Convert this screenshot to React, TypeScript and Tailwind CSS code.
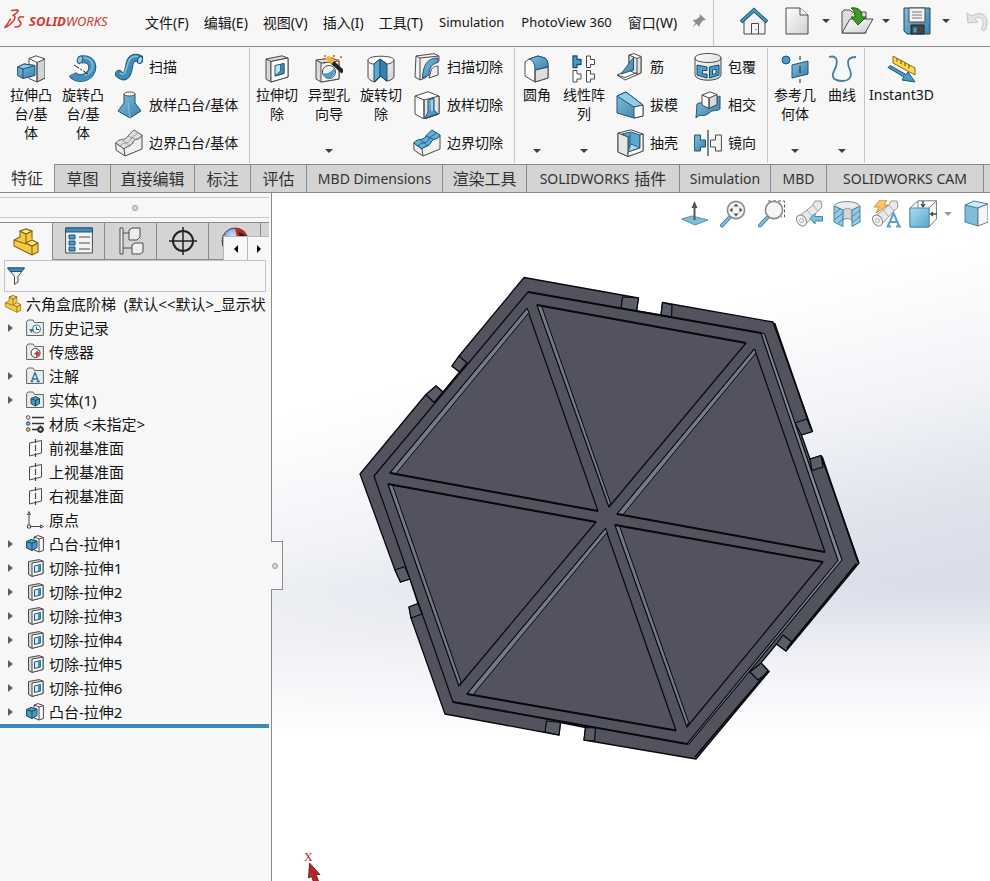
import React from "react";

type IconProps = { children: React.ReactNode; className?: string; box?: string };

function Icon({ children, className = "size-7", box = "0 0 28 28" }: IconProps) {
  return (
    <svg viewBox={box} className={`${className} shrink-0`} fill="none" stroke="#4a4a4a" strokeWidth="1" strokeLinejoin="round" aria-hidden="true">
      {children}
    </svg>
  );
}

function Gradients() {
  return (
    <svg className="absolute size-0" aria-hidden="true">
      <defs>
        <linearGradient id="blue" x1="0" y1="0" x2="1" y2="1">
          <stop offset="0" stopColor="#84bfdd" />
          <stop offset="1" stopColor="#3880a8" />
        </linearGradient>
        <linearGradient id="pale" x1="0" y1="0" x2="1" y2="1">
          <stop offset="0" stopColor="#ffffff" />
          <stop offset="1" stopColor="#cfcfcf" />
        </linearGradient>
        <linearGradient id="sky" x1="0" y1="0" x2="1" y2="1">
          <stop offset="0" stopColor="#a9dcf3" />
          <stop offset="1" stopColor="#5ba6cb" />
        </linearGradient>
        <radialGradient id="ball" cx="0.4" cy="0.3" r="0.8">
          <stop offset="0" stopColor="#dbe6ff" />
          <stop offset="0.6" stopColor="#4a6fc0" />
          <stop offset="1" stopColor="#20356e" />
        </radialGradient>
      </defs>
    </svg>
  );
}

/* ---------- ribbon icons ---------- */

const ExtrudeBoss = () => (
  <Icon>
    <path d="M12 3.500 19 0.800 28 4 28 23 20 27 12 23.500Z" fill="#fff" />
    <path d="M20 7.500 28 4 28 23 20 27Z" fill="#d4d4d4" />
    <path d="M12 3.500 20 7.500V27" />
    <path d="M0.6 12 7 9 18 10.500 18 20.500 6 23.500 0.600 20.500Z" fill="url(#blue)" stroke="#1d5474" />
    <path d="M0.6 12 7 9 18 10.500 6 14Z" fill="#93cae5" stroke="#1d5474" />
    <path d="M6 14V23.500" stroke="#1d5474" />
  </Icon>
);
const RevolveBoss = () => (
  <Icon>
    <path d="M12 4.500C26 2 27 19 15 22.500 10 24 5 22 3.500 19" stroke="#1d5474" strokeWidth="8" />
    <path d="M12 4.500C26 2 27 19 15 22.500 10 24 5 22 3.500 19" stroke="#458fba" strokeWidth="6.400" />
    <path d="M12 3C27 1 27 17 16 20.500" stroke="#82bbda" strokeWidth="1.800" />
    <ellipse cx="11" cy="4.700" rx="2.600" ry="3.800" fill="#8cc6e2" stroke="#1d5474" transform="rotate(20 11 4.700)" />
    <path d="M5 10 19 19" stroke="#222" strokeDasharray="6 1.500 2 1.500" />
  </Icon>
);
const SweepBoss = () => (
  <Icon>
    <path d="M4 21C11 27 13 20 14 14 15 6 18 3 25 6" stroke="#1d5474" strokeWidth="8" strokeLinecap="round" />
    <path d="M4 21C11 27 13 20 14 14 15 6 18 3 25 6" stroke="#3e8ab6" strokeWidth="6.300" strokeLinecap="round" />
    <path d="M5 20C10 24 11 17 12.500 12 14 5 18 2 24 4" stroke="#86bfdd" strokeWidth="1.600" />
    <ellipse cx="25" cy="7" rx="2.400" ry="3.600" fill="#a4d3eb" stroke="#1d5474" transform="rotate(15 25 7)" />
  </Icon>
);
const LoftBoss = () => (
  <Icon>
    <path d="M9 3V12L3 20 15 27 26 20 20 12V3Z" fill="url(#blue)" stroke="#1d5474" />
    <path d="M13 12 15 27" stroke="#9bcfe6" strokeWidth="0.800" />
    <ellipse cx="14.500" cy="3" rx="5.500" ry="2" fill="#fff" />
  </Icon>
);
const surfaceTop = "M0.800 14C5 8 9 13 13 7 15 4 17 3 19 1L27 6C24 12 21 8 18 13 16 18 11 17 9 20Z";
const Boundary = ({ cut = false }: { cut?: boolean }) => (
  <Icon>
    <path d="M0.800 14 9 20C11 17 16 18 18 13 21 8 24 12 27 6V20L10 27 1 21Z" fill="#f0f0f0" />
    <path d={surfaceTop} fill={cut ? "#62b0d8" : "#dedede"} stroke={cut ? "#1d5474" : "#666"} />
    <path d="M5 17C9 12 13 16 16 10 18 6 20 8 23 3.500M7 10.500 15 17M13 7 21 10.500" stroke={cut ? "#164a68" : "#8a8a8a"} strokeWidth="0.800" />
    <path d="M9 20 10 27" />
  </Icon>
);
const ExtrudeCut = () => (
  <Icon>
    <path d="M3 4 19 0.800 25 3V22L8 27 3 24Z" fill="#d8d8d8" />
    <path d="M3 4 8 6.500 25 3M8 6.500V27" />
    <path d="M8 6.500 25 3V22L8 27Z" fill="#fff" />
    <path d="M12 10.500 21 8.500V18.500L12 21Z" fill="#bfe2f1" stroke="#1d5474" />
    <path d="M17.500 9.500 21 8.500V18.500L12 21 17.500 16Z" fill="#3f8fb9" stroke="#1d5474" strokeWidth="0.800" />
  </Icon>
);
const HoleWizard = () => (
  <Icon>
    <path d="M1 5 17 3 24 6V24L6 27 1 24Z" fill="#dadada" />
    <path d="M6 8 24 6V24L6 27Z" fill="#f6f6f6" />
    <path d="M1 5 6 8" />
    <circle cx="14" cy="17" r="6.500" fill="#f3fafd" />
    <path d="M7.800 18C12 19 17 17 19 12.500 22 18 17 24 13 23.500 10 23 8 21 7.800 18Z" fill="#4d9fca" stroke="none" />
    <path d="M16 6 28 17" stroke="#222" strokeWidth="4.200" />
    <path d="M12 2 18 7.500" stroke="#f3b52c" strokeWidth="4.200" />
    <path d="M8 4h2M10 0v2M18 1h2M23 4v2M26 1v2M23 8h2M9 8v1" stroke="#d07a1c" strokeWidth="1.800" />
  </Icon>
);
const RevolveCut = () => (
  <Icon>
    <path d="M1 5V22C1 24 4 26 8 27L14 21 19 26C21 26 26 25 27 22V5Z" fill="url(#pale)" />
    <path d="M1 5C1 0 27 0 27 5 26 8 22 9 20 9L13 4 7 9C4 9 1 8 1 5Z" fill="#fff" />
    <path d="M13 4 7 9V27L13 21Z" fill="#5aa9d0" stroke="#1d5474" />
    <path d="M13 4 20 9V26L13 21Z" fill="#3880a8" stroke="#1d5474" />
  </Icon>
);
const SweepCut = () => (
  <Icon>
    <path d="M3 3 21 0.600 26 3V8C14 9 16 25 12 25L7 27 2 24Z" fill="#f2f2f2" />
    <path d="M3 3 7 5 26 3M7 5V27" />
    <path d="M25 5C13 5 10 14 9.500 25L16 22C16 16 18 11 25 9.500Z" fill="url(#blue)" stroke="#1d5474" />
    <path d="M18 18C18 15 22 13 25 13V22L16 25Z" fill="#eee" />
  </Icon>
);
const LoftCut = () => (
  <Icon>
    <path d="M2 5 15 0.800 26 5V23L11 28 2 23Z" fill="#fff" />
    <path d="M11 9 26 5V23L11 28Z" fill="#e6e6e6" />
    <path d="M2 5 11 9V28" />
    <path d="M15 9 21 7V19L25 23 12 27 15 21Z" fill="url(#blue)" stroke="#1d5474" />
    <path d="M19 9V20" stroke="#a5d7ee" strokeWidth="1.800" />
  </Icon>
);
const Fillet = () => (
  <Icon>
    <path d="M2 7 6 4 15 1 22 3C25 5 25 9 25 12V23L12 27 2 21Z" fill="#fff" />
    <path d="M12 15 25 12V23L12 27Z" fill="#dedede" />
    <path d="M6 4 15 1 22 3C25 5 25 9 25 12L12 15C12 9 10 5 6 4Z" fill="url(#blue)" stroke="#1d5474" />
    <path d="M12 15V27" />
  </Icon>
);
const tee = "M0 0H4V3.500H8V8.500H4V11.500H0Z";
const Pattern = () => (
  <Icon>
    <path d={tee} transform="translate(3 1)" fill="#4a9ac4" stroke="#1d5474" strokeWidth="1.300" />
    <path d={tee} transform="translate(16.500 1)" fill="#fff" />
    <path d={tee} transform="translate(3 15.500)" fill="#fff" />
    <path d={tee} transform="translate(16.500 15.500)" fill="#fff" />
  </Icon>
);
const Rib = () => (
  <Icon>
    <path d="M13 2 18 0.600 25 3.500V20L9 27 1 22 13 17Z" fill="#fff" />
    <path d="M13 2 21 5.500 25 3.500V20L21 21.500 13 17Z" fill="#e3e3e3" />
    <path d="M21 5.500V21.500" />
    <path d="M17.500 4.500V17L5 21Z" fill="url(#blue)" stroke="#1d5474" />
    <path d="M1 22 9 24.500 21 19.500" />
  </Icon>
);
const Draft = () => (
  <Icon>
    <path d="M1 5 10 1 27 14 27 25 18 27 1 22Z" fill="url(#blue)" stroke="#1d5474" />
    <path d="M1 5 10 1 27 14 18 16Z" fill="#8fcdeb" stroke="#1d5474" />
    <path d="M18 16 27 14V25L18 27Z" fill="#fff" />
  </Icon>
);
const Shell = () => (
  <Icon>
    <path d="M2 4 15 0.800 27 5V22L12 27.500 2 23Z" fill="#f4f4f4" />
    <path d="M6 5 15 3 24 6V19L12 23V8Z" fill="#5aa9d0" stroke="#1d5474" />
    <path d="M12 8 15 3V15L12 23Z" fill="#3880a8" stroke="none" />
    <path d="M15 15 24 19 12 23Z" fill="#a9dcf3" stroke="#1d5474" strokeWidth="0.800" />
    <path d="M2 4 12 8V27.500L2 23Z" fill="#e6e6e6" />
    <path d="M12 23 24 19V6L27 5V22L12 27.500Z" fill="#fff" />
  </Icon>
);
const Wrap = () => (
  <Icon>
    <path d="M1 5C1 -1 27 -1 27 5V22C26 29 2 29 1 22Z" fill="url(#pale)" />
    <path d="M1 5C1 11 27 11 27 5" />
    <path d="M3 12 13 14V17.500H8.500V21H13V25L3 22Z" fill="#4d9fca" stroke="#164a68" />
    <path d="M15.500 14 25 12V22L15.500 25Z" fill="#4d9fca" stroke="#164a68" />
    <path d="M18.500 17 22 16V20.500L18.500 21.500Z" fill="#e6f4fa" stroke="#164a68" />
  </Icon>
);
const Intersect = () => (
  <Icon>
    <path d="M3 13C8 10 10 14 15 9 19 6 22 8 26 5V18C22 21 19 18 15 22 9 27 6 22 2 27Z" fill="url(#blue)" stroke="#1d5474" />
    <path d="M8 4 16 0.800 23 3.500V13.500L15 17.500 8 14Z" fill="#fff" />
    <path d="M15 7 23 3.500V13.500L15 17.500Z" fill="#d9d9d9" />
    <path d="M8 4 15 7V17.500" />
  </Icon>
);
const Mirror = () => (
  <Icon>
    <path d="M0.600 6H6.500V11H11.500V18H6.500V22H0.600Z" fill="url(#blue)" stroke="#1d5474" />
    <path d="M27.400 6H21.500V11H16.500V18H21.500V22H27.400Z" fill="#f4f4f4" />
    <path d="M14 1V27" stroke="#111" />
  </Icon>
);
const RefGeometry = () => (
  <Icon>
    <circle cx="5" cy="5" r="4" fill="#4a9ac4" stroke="#1d5474" />
    <path d="M11 10 27 6V19L11 23Z" fill="url(#blue)" stroke="#1d5474" />
    <path d="M19 1V5M19 11V18M19 24V28" stroke="#222" />
  </Icon>
);
const Curves = () => (
  <Icon>
    <path d="M1 2C12 -1 9 11 6 16 2 24 9 26 14 26 20 26 25 23 22 15 18 6 20 2 28 2" stroke="#3d7fa6" strokeWidth="1.800" />
  </Icon>
);
const Instant3D = () => (
  <Icon className="h-7 w-[30px]" box="0 0 30 28">
    <path d="M6 1 28 13V20L6 8Z" fill="#ffd74a" stroke="#8a6914" />
    <path d="M10 3.500V6.500M14 5.500V9M18 8V11M22 10V13.500" stroke="#5a4510" />
    <path d="M1 12.500 17 22 15 25 28 27 21 17 19 19.500 3 10.500Z" fill="#4a9ac4" stroke="#1d5474" />
  </Icon>
);

/* ---------- title bar icons ---------- */

const DsMark = () => (
  <Icon className="h-5 w-[22px]" box="0 0 22 20">
    <g stroke="#cf3a30" strokeWidth="1.500" strokeLinecap="round">
      <path d="M7.500 1.500 13.500 1C15.500 1.500 12 4.500 9 6.500 12 6.500 11.500 10 8.500 13 5 16.500 2 18.500 0.800 18.500 3 16 5 12.500 6.500 10" />
      <path d="M19.500 8C15 7 13 9.500 15.500 12 18.500 15 16 18.500 11 18" />
    </g>
  </Icon>
);
const Home = () => (
  <Icon>
    <path d="M4 13 14 4 25 13V27H4Z" fill="#f3f3f3" />
    <path d="M11.500 27V16.500H18.500V27M16 22v1" />
    <path d="M1 15 14 3 27 15" stroke="#1d5474" strokeWidth="3.800" strokeLinejoin="miter" />
    <path d="M1.500 14.500 14 3 26.500 14.500" stroke="#4a9ac4" strokeWidth="2" strokeLinejoin="miter" />
  </Icon>
);
const NewDoc = () => (
  <Icon className="h-7 w-6" box="0 0 24 28">
    <path d="M1 1H15L23 8V27H1Z" fill="url(#pale)" />
    <path d="M15 1V8H23" fill="#fff" />
  </Icon>
);
const OpenDoc = () => (
  <Icon className="h-7 w-[33px]" box="0 0 33 28">
    <path d="M1 5 3 3H9L11 5H25V26H1Z" fill="#ddd" />
    <path d="M9 12H32L24 26H1Z" fill="url(#pale)" />
    <path d="M10 1C18 0 21 4 21 10H25L17 18 10 10H14C14 6 13 3 10 1Z" fill="#3d9a22" stroke="#1e5c10" />
  </Icon>
);
const Save = () => (
  <Icon>
    <path d="M1 1H27V27H4L1 24Z" fill="url(#blue)" stroke="#1b4a66" />
    <path d="M6 1H22V15H6Z" fill="#f4f4f4" />
    <path d="M9 5H19M9 8H19M9 11H19" stroke="#777" />
    <path d="M8 18H21V27H8Z" fill="#444" stroke="#222" />
    <path d="M10 20H14V26H10Z" fill="#4a9ac4" />
  </Icon>
);
const Undo = () => (
  <Icon className="h-6 w-[23px]" box="0 0 23 24">
    <path d="M1 4 2 14 12 13 9 10C15 5 20 13 15 20L18 22C26 12 18 -1 6 7Z" fill="#e3e3e3" stroke="#c4c4c4" />
  </Icon>
);
const Pin = () => (
  <Icon className="size-4" box="0 0 16 16">
    <path d="M9 1 15 7 12 7.500 9 11 8.500 14 5.500 11 1 14.500 4.500 10 1.500 7 5 6.500 8.500 4Z" fill="#8d8d8d" stroke="none" />
  </Icon>
);

/* ---------- tree icons ---------- */

const PartIcon = ({ className = "size-[18px]" }: { className?: string }) => (
  <Icon className={className} box="0 0 26 28">
    <g fill="#f6c945" stroke="#84640f" strokeWidth="1.100">
      <path d="M1 12 7 9 7 3 13 1 19 3V12L25 15V24L19 27 1 18Z" />
      <path d="M7 3 13 6 19 3M13 6V15L19 18 25 15M19 18V27M1 12 13 16" />
      <path d="M7 3 13 1 19 3 13 6ZM13 15 19 12 25 15 19 18Z" fill="#ffe68c" />
    </g>
  </Icon>
);
const Folder = ({ children }: { children: React.ReactNode }) => (
  <Icon className="size-[18px]" box="0 0 18 18">
    <path d="M0.600 16.500V2.500L2 1H7L8.500 3.500H17.400V16.500Z" fill="#ececec" stroke="#666" />
    {children}
  </Icon>
);
const History = () => (
  <Folder>
    <circle cx="10.500" cy="10" r="4" fill="#fff" stroke="#2f789f" />
    <path d="M10.500 8V10.500H13" stroke="#333" />
    <path d="M3 10H8L5.500 14Z" fill="#2f789f" stroke="none" />
  </Folder>
);
const Sensor = () => (
  <Folder>
    <circle cx="9.500" cy="10" r="4.500" fill="#fff" stroke="#333" />
    <path d="M9.500 10 13 8.500V12L10 14Z" fill="#c43a2a" stroke="none" />
    <path d="M8 11.500 12 7.500" stroke="#222" />
  </Folder>
);
const Annotation = () => (
  <Folder>
    <path d="M5.500 14.500 9 5.500 12.500 14.500M6.500 12H11.500M4.500 14.500H7.500M10.500 14.500H14" stroke="#2f789f" strokeWidth="1.400" />
  </Folder>
);
const Solid = () => (
  <Folder>
    <path d="M5 7.500 9.500 5.500 13.500 7.500V12.500L9.500 15 5 12.500Z" fill="#4a9ac4" stroke="#17465f" />
    <path d="M5 7.500 9.500 9.500 13.500 7.500M9.500 9.500V15" stroke="#17465f" />
  </Folder>
);
const Material = () => (
  <Icon className="size-[18px]" box="0 0 18 18">
    <path d="M6 2.500H18M6 8.500H18M6 14.500H11" stroke="#333" strokeWidth="1.600" />
    <circle cx="2.200" cy="2.500" r="1.800" fill="#eee" />
    <circle cx="2.200" cy="8.500" r="1.800" fill="#6cb2d6" />
    <circle cx="2.200" cy="14.500" r="1.800" fill="#eac23c" />
    <circle cx="14.500" cy="14.500" r="2.200" stroke="#333" strokeWidth="2" />
    <path d="M14.500 10.500V12M14.500 17V18.500M10.500 14.500H12M17 14.500H18.500" stroke="#333" strokeWidth="1.500" />
  </Icon>
);
const Plane = () => (
  <Icon className="size-[18px]" box="0 0 18 18">
    <path d="M3.500 4 15.500 1.500V14L3.500 17Z" fill="#fafafa" />
    <path d="M9.500 0V4M9.500 6V12M9.500 14V18" strokeWidth="1.200" />
  </Icon>
);
const Origin = () => (
  <Icon className="size-[18px]" box="0 0 18 18">
    <path d="M3 3V14M5 15.500H15M1.500 3.500 3 0.500 4.500 3.500ZM14.500 14 17.500 15.500 14.500 17ZM1.500 14H4.500V17H1.500Z" />
  </Icon>
);
const BossItem = () => (
  <Icon className="size-[18px]" box="0 0 18 18">
    <path d="M8 2 12 0.600 17.400 2.500V15.500L13 17 8 15Z" fill="#f8f8f8" />
    <path d="M13 4 17.400 2.500M13 4V17M8 2 13 4" />
    <path d="M0.600 6.500 5 4.500 11 6V12.500L6 15.500 0.600 13Z" fill="#4a9ac4" stroke="#17465f" />
    <path d="M0.600 6.500 6 8.500 11 6M6 8.500V15.500" stroke="#17465f" />
  </Icon>
);
const CutItem = () => (
  <Icon className="size-[18px]" box="0 0 18 18">
    <path d="M2.500 2.500 13 0.600 17 2V14.500L6 17.400 2.500 15.500Z" fill="#d6d6d6" />
    <path d="M6 4 17 2V14.500L6 17.400Z" fill="#f6f6f6" />
    <path d="M8.500 7 14.500 5.500V12L8.500 13.500Z" fill="#d3ecf6" stroke="#1d5474" />
    <path d="M12 6.500 14.500 5.500V12L12 12.500Z" fill="#3f8fb9" stroke="none" />
  </Icon>
);

/* ---------- view toolbar icons ---------- */

const NormalTo = () => (
  <Icon>
    <path d="M0.600 19 11 16 27 20 14 25Z" fill="#7fbdd8" stroke="#4f93b5" />
    <path d="M13.500 20V7" stroke="#555" strokeWidth="2" />
    <path d="M13.500 1 16.500 8H10.500Z" fill="#555" stroke="none" />
  </Icon>
);
const lens = (
  <>
    <path d="M10 18 3 25.500" stroke="#397b9d" strokeWidth="4" strokeLinecap="round" />
    <path d="M10 18 3 25.500" stroke="#79bddd" strokeWidth="2.400" strokeLinecap="round" />
    <circle cx="17" cy="10" r="8.600" fill="#f3f5f6" stroke="#8b8b8b" strokeWidth="1.600" />
  </>
);
const ZoomFit = () => (
  <Icon>
    {lens}
    <path d="M17 3.500 19.500 6.500H14.500ZM17 16.500 19.500 13.500H14.500ZM10.500 10 13.500 7.500V12.500ZM23.500 10 20.500 7.500V12.500Z" fill="#555" stroke="none" />
  </Icon>
);
const ZoomArea = () => (
  <Icon>
    <path d="M11 1H27.500V17H24" strokeDasharray="3 2" stroke="#555" />
    {lens}
  </Icon>
);
const scope = (
  <>
    <path d="M3 17 12 10 18 5 20 1 26 1 27 7 22 12 10 25Z" fill="#e9e9e9" stroke="#999" />
    <ellipse cx="6.500" cy="20.500" rx="4.500" ry="6" fill="#f6f6f6" stroke="#888" transform="rotate(-35 6.500 20.500)" />
    <path d="M12 10 18 17M18 5 23 11" stroke="#aaa" />
    <circle cx="6.500" cy="20.500" r="2" stroke="#aaa" />
  </>
);
const PrevView = () => (
  <Icon>
    {scope}
    <path d="M15 18.500 20 13.500V16.500H27.500V21H20V24Z" fill="#7fbdd8" stroke="#3f86a8" />
  </Icon>
);
const Section = () => (
  <Icon>
    <path d="M1 6C4 0 24 0 27 6L19 10V20C16 18 12 18 10 20V10Z" fill="#ececec" stroke="#888" />
    <path d="M10 10C12 8 17 8 19 10V20C16 18 12 18 10 20Z" fill="#d6d6d6" stroke="#999" />
    <path d="M1 6 10 10V26.500L1 22Z" fill="#93cae5" stroke="#3f86a8" />
    <path d="M19 10 27 6V22L19 26.500Z" fill="#93cae5" stroke="#3f86a8" />
    <path d="M1 14 7 9M1 20 10 13M4 24 10 19M19 17 27 10M19 23 27 16" stroke="#3f86a8" />
  </Icon>
);
const AnnotationView = () => (
  <Icon className="h-7 w-[30px]" box="0 0 30 28">
    {scope}
    <path d="M9 0H16L13 5H17L5 13 8 7H3Z" fill="#f9c860" stroke="#c99243" />
    <path d="M17 26 22.500 13 28 26M19 22H26M15.500 26.500H20M25 26.500H30" stroke="#5d9fc0" strokeWidth="2" />
  </Icon>
);
const ViewCube = () => (
  <Icon>
    <path d="M1 8 9 0.800H27.400V19L20 27H1Z" fill="#fff" stroke="#777" />
    <path d="M20 8 27.400 1M20 27V8M9 1V8" stroke="#777" />
    <path d="M1 8H20V27H1Z" fill="url(#sky)" stroke="#4a8cae" />
    <path d="M14 1V6M12 4 14 7 16 4M28 14H22M24 12 21.500 14 24 16" stroke="#444" strokeWidth="1.300" />
  </Icon>
);
const DisplayStyle = () => (
  <Icon className="h-7 w-6" box="0 0 24 28">
    <path d="M1 5 14 8V26L1 22Z" fill="#7fbdd8" stroke="#3f86a8" />
    <path d="M1 5 10 1 24 4 14 8Z" fill="#cfeaf5" stroke="#3f86a8" />
    <path d="M14 8 24 4V22L14 26Z" fill="#f3f6f8" stroke="#777" />
  </Icon>
);

/* ---------- shared pieces ---------- */

function Caret({ className = "text-[#404040]" }: { className?: string }) {
  return (
    <svg viewBox="0 0 8 4" className={`h-1 w-2 shrink-0 ${className}`} aria-hidden="true">
      <path d="M0 0H8L4 4Z" fill="currentColor" />
    </svg>
  );
}

type ToolProps = { icon: React.ReactNode; lines: string[]; width?: string; menu?: boolean };

function Tool({ icon, lines, width = "w-[52px]", menu = false }: ToolProps) {
  return (
    <button className={`flex h-full ${width} shrink-0 flex-col items-center pt-[7px]`}>
      {icon}
      <span className="mt-[2px] flex flex-col items-center text-sm leading-[19px] whitespace-nowrap">
        {lines.map((line) => (
          <span key={line}>{line}</span>
        ))}
      </span>
      {menu && <Caret className="mt-auto mb-[10px] text-[#404040]" />}
    </button>
  );
}

function ToolColumn({ items }: { items: [React.ReactNode, string][] }) {
  return (
    <div className="flex flex-col">
      {items.map(([icon, label]) => (
        <button key={label} className="flex h-[38px] items-center gap-[6px] text-sm whitespace-nowrap">
          {icon}
          {label}
        </button>
      ))}
    </div>
  );
}

function Group({ width, children }: { width: string; children: React.ReactNode }) {
  return <div className={`my-px flex ${width} shrink-0 border-r border-[#c6c6c6]`}>{children}</div>;
}

/* ---------- sections ---------- */

const menus = ["文件(F)", "编辑(E)", "视图(V)", "插入(I)", "工具(T)", "Simulation", "PhotoView 360", "窗口(W)"];

function TitleBar() {
  return (
    <header className="flex h-[47px] shrink-0 items-center overflow-hidden border-b border-[#8a8a8a]">
      <div className="flex w-[145px] shrink-0 items-center pb-2 pl-1">
        <DsMark />
        <span className="mt-[5px] ml-[3px] text-[13px] text-[#cf3a30] italic">
          <b>SOLID</b>WORKS
        </span>
      </div>
      <nav className="flex items-center gap-[15px] whitespace-nowrap">
        {menus.map((m) => (
          <button key={m} className={/^[A-Z]/.test(m) ? "px-px text-[13px]" : "text-sm"}>
            {m}
          </button>
        ))}
      </nav>
      <button className="ml-[14px] pb-1" aria-label="固定菜单">
        <Pin />
      </button>
      <div className="ml-[6px] flex shrink-0 items-center self-stretch border-l border-[#c6c6c6] pb-[4px] pl-[26px]">
        <button aria-label="主页"><Home /></button>
        <button className="ml-[17px]" aria-label="新建"><NewDoc /></button>
        <button className="ml-[13px]" aria-label="新建选项"><Caret /></button>
        <button className="ml-[11px]" aria-label="打开"><OpenDoc /></button>
        <button className="ml-2" aria-label="打开选项"><Caret /></button>
        <button className="ml-[13px]" aria-label="保存"><Save /></button>
        <button className="ml-[11px]" aria-label="保存选项"><Caret /></button>
        <button className="ml-4" aria-label="撤消"><Undo /></button>
      </div>
    </header>
  );
}

function Ribbon() {
  return (
    <div className="flex h-[117px] shrink-0 overflow-hidden">
      <Group width="w-[250px] pl-[5px]">
        <Tool icon={<ExtrudeBoss />} lines={["拉伸凸", "台/基", "体"]} />
        <Tool icon={<RevolveBoss />} lines={["旋转凸", "台/基", "体"]} />
        <div className="pl-[6px]">
          <ToolColumn items={[[<SweepBoss />, "扫描"], [<LoftBoss />, "放样凸台/基体"], [<Boundary />, "边界凸台/基体"]]} />
        </div>
      </Group>
      <Group width="w-[265px] pl-px">
        <Tool icon={<ExtrudeCut />} lines={["拉伸切", "除"]} />
        <Tool icon={<HoleWizard />} lines={["异型孔", "向导"]} menu />
        <Tool icon={<RevolveCut />} lines={["旋转切", "除"]} />
        <div className="pl-[6px]">
          <ToolColumn items={[[<SweepCut />, "扫描切除"], [<LoftCut />, "放样切除"], [<Boundary cut />, "边界切除"]]} />
        </div>
      </Group>
      <Group width="w-[253px]">
        <Tool icon={<Fillet />} lines={["圆角"]} width="w-11" menu />
        <Tool icon={<Pattern />} lines={["线性阵", "列"]} width="w-[50px]" menu />
        <div className="flex gap-4 pl-[7px]">
          <ToolColumn items={[[<Rib />, "筋"], [<Draft />, "拔模"], [<Shell />, "抽壳"]]} />
          <ToolColumn items={[[<Wrap />, "包覆"], [<Intersect />, "相交"], [<Mirror />, "镜向"]]} />
        </div>
      </Group>
      <Group width="w-[97px]">
        <Tool icon={<RefGeometry />} lines={["参考几", "何体"]} width="w-[54px]" menu />
        <Tool icon={<Curves />} lines={["曲线"]} width="w-10" menu />
      </Group>
      <div className="my-px flex">
        <Tool icon={<Instant3D />} lines={["Instant3D"]} width="w-[73px]" />
      </div>
    </div>
  );
}

const tabs: { latin?: string; cjk?: string; width: string }[] = [
  { cjk: "特征", width: "w-[55px]" },
  { cjk: "草图", width: "w-14" },
  { cjk: "直接编辑", width: "w-[84px]" },
  { cjk: "标注", width: "w-14" },
  { cjk: "评估", width: "w-14" },
  { latin: "MBD Dimensions", width: "w-[136px]" },
  { cjk: "渲染工具", width: "w-[84px]" },
  { latin: "SOLIDWORKS", cjk: "插件", width: "w-[153px]" },
  { latin: "Simulation", width: "w-[91px]" },
  { latin: "MBD", width: "w-14" },
  { latin: "SOLIDWORKS CAM", width: "w-[157px]" },
];

function CommandTabs() {
  return (
    <div role="tablist" className="flex h-[29px] shrink-0 overflow-hidden text-[#333]">
      {tabs.map((t, i) => (
        <button
          key={t.width + i}
          role="tab"
          aria-selected={i === 0}
          className={`flex ${t.width} shrink-0 items-center justify-center gap-[5px] border-r border-b border-[#8a8a8a] whitespace-nowrap ${
            i === 0 ? "" : "border-t bg-[#d4d4d4]"
          }`}
        >
          {t.latin && <span className="text-sm">{t.latin}</span>}
          {t.cjk && <span className="text-base leading-6">{t.cjk}</span>}
        </button>
      ))}
      <div className="flex-1 border-t border-b border-[#8a8a8a] bg-[#d4d4d4]" />
    </div>
  );
}

const tree: [React.ReactNode, string, boolean][] = [
  [<History />, "历史记录", true],
  [<Sensor />, "传感器", false],
  [<Annotation />, "注解", true],
  [<Solid />, "实体(1)", true],
  [<Material />, "材质 <未指定>", false],
  [<Plane />, "前视基准面", false],
  [<Plane />, "上视基准面", false],
  [<Plane />, "右视基准面", false],
  [<Origin />, "原点", false],
  [<BossItem />, "凸台-拉伸1", true],
  [<CutItem />, "切除-拉伸1", true],
  [<CutItem />, "切除-拉伸2", true],
  [<CutItem />, "切除-拉伸3", true],
  [<CutItem />, "切除-拉伸4", true],
  [<CutItem />, "切除-拉伸5", true],
  [<CutItem />, "切除-拉伸6", true],
  [<BossItem />, "凸台-拉伸2", true],
];

const panelTab = "flex h-full w-[52px] shrink-0 items-center justify-center border-t border-r border-b border-[#8a8a8a] bg-[#d4d4d4]";

function PanelTabs() {
  return (
    <div className="relative mt-1 mr-[2px] flex h-[38px] overflow-hidden">
      <button className="flex h-full w-[53px] shrink-0 items-center justify-center border-t border-r border-[#8a8a8a]" aria-label="特征树">
        <PartIcon className="h-7 w-[26px]" />
      </button>
      <button className={panelTab} aria-label="属性">
        <Icon>
          <path d="M0.600 1H27.400V26H0.600Z" fill="#f3f3f3" />
          <path d="M0.600 1H27.400V5H0.600Z" fill="#3f8fb9" stroke="#1d5474" />
          <path d="M4 8H10V12H4ZM4 14H10V18H4ZM4 20H10V24H4Z" fill="#4a9ac4" stroke="#1d5474" />
          <path d="M14 10H25M14 16H25M14 22H25" />
        </Icon>
      </button>
      <button className={panelTab} aria-label="配置">
        <Icon>
          <path d="M3 1H6V27H3ZM6 6H12M6 21H15" fill="#eee" />
          <path d="M12 3 15 1H23V10L20 13H12ZM15 18 18 16H26V25L23 27H15Z" fill="#eee" />
        </Icon>
      </button>
      <button className={panelTab} aria-label="尺寸">
        <Icon>
          <circle cx="14" cy="14" r="10" stroke="#222" strokeWidth="2" />
          <path d="M14 0V28M0 14H28" stroke="#222" strokeWidth="1.500" />
        </Icon>
      </button>
      <button className={panelTab} aria-label="外观">
        <Icon>
          <circle cx="14" cy="14" r="13" fill="url(#ball)" stroke="#345" />
          <path d="M14 1C24 1 27 8 27 14H17Z" fill="#b52a22" stroke="none" />
          <path d="M18 5 24 8 26 14H19Z" fill="#222" stroke="none" />
        </Icon>
      </button>
      <div className={panelTab} />
      <div className="absolute right-0 bottom-0 flex border-t border-l border-[#b8b8b8] bg-[#f7f7f7]">
        <button className="flex h-[23px] w-6 items-center justify-center border-r border-[#b8b8b8]" aria-label="向左">
          <svg viewBox="0 0 4 8" className="h-2 w-1"><path d="M4 0V8L0 4Z" /></svg>
        </button>
        <button className="flex h-[23px] w-[21px] items-center justify-center" aria-label="向右">
          <svg viewBox="0 0 4 8" className="h-2 w-1"><path d="M0 0V8L4 4Z" /></svg>
        </button>
      </div>
    </div>
  );
}

function FeaturePanel() {
  return (
    <aside className="relative w-[272px] shrink-0 border-r border-[#8a8a8a]">
      <div className="mt-1 mr-[2px] flex h-[21px] items-center justify-center border-t border-b border-[#cacaca]">
        <span className="size-[6px] rounded-full border border-[#999] bg-[#d8d8d8]" />
      </div>
      <PanelTabs />
      <label className="mr-[5px] ml-1 flex h-8 items-center border border-[#c3c3cc] pl-[2px]">
        <Icon className="size-[18px]" box="0 0 18 18">
          <path d="M0.600 1H17.400L11 9.500V15L7.500 17.500V9.500Z" fill="#f0f0f0" />
          <path d="M0.600 1H17.400L14.500 4.500H3.500Z" fill="#3f8fb9" stroke="#1d5474" />
        </Icon>
        <input aria-label="过滤" className="ml-1 min-w-0 flex-1 bg-transparent outline-none" />
      </label>
      <div className="mr-[2px] flex h-6 items-center gap-1 overflow-hidden pl-1 text-[15px] whitespace-pre">
        <PartIcon />
        六角盒底阶梯  (默认&lt;&lt;默认&gt;_显示状
      </div>
      <ul className="text-[15px]">
        {tree.map(([icon, label, open]) => (
          <li key={label} className="flex h-6 items-center whitespace-nowrap">
            <span className="w-[26px] pl-2">
              {open && (
                <svg viewBox="0 0 5 8" className="h-2 w-[5px]" aria-hidden="true">
                  <path d="M0 0 5 4 0 8Z" fill="#606060" />
                </svg>
              )}
            </span>
            {icon}
            <span className="ml-[5px]">{label}</span>
          </li>
        ))}
      </ul>
      <div className="mr-[2px] h-1 bg-[#3f88b5]" />
      <button
        aria-label="折叠面板"
        className="absolute top-[348px] -right-3 z-10 flex h-[49px] w-3 items-center justify-center border border-l-0 border-[#8a8a8a] bg-[#f7f7f7]"
      >
        <span className="-ml-1 size-[6px] rounded-full border border-[#999] bg-[#d8d8d8]" />
      </button>
    </aside>
  );
}

const viewTools: [React.ReactNode, string][] = [
  [<NormalTo />, "正视于"],
  [<ZoomFit />, "整屏显示全图"],
  [<ZoomArea />, "局部放大"],
  [<PrevView />, "上一视图"],
  [<Section />, "剖面视图"],
  [<AnnotationView />, "动态注解视图"],
  [<ViewCube />, "视图定向"],
];

const plateOutline =
  "M524 277.500 638.500 298 636.500 311 661 315 662.500 302.500 773 322 812.500 431.500 801.500 435 810 459 821 455.500 859 563 786 651 776.500 644 761 663 769 671.500 696 759 584 740 585.500 727.500 560.500 722.500 559 735 445 714 411 618 409 607 418 603.500 410 579 400.500 582 395 570 360 474 425.500 395 436 386 443 392 459.500 372 452 366 459 356Z";

const pockets = [
  "M527 308.500 390 473 598 511Z",
  "M537 305 746 343 609 507Z",
  "M754.500 349 617 514 825 552Z",
  "M615 525 823 562 687 727Z",
  "M605.500 528.500 467 694 676 730.500Z",
  "M388 484 596 522 459 686Z",
];

const walls = [
  "M527 308.500 390 473 396 473.500 529 312.500Z",
  "M537 305 609 507 610.500 503 541.500 306Z",
  "M754.500 349 617 514 623 514.500 756 353Z",
  "M615 525 687 727 688.500 722 619.500 526Z",
  "M605.500 528.500 467 694 473 694.500 607 532.500Z",
  "M388 484 459 686 461 682 392.500 485Z",
];

function Plate() {
  return (
    <svg viewBox="272 193 718 688" className="absolute inset-0 size-full" fill="none" stroke="#08090d" strokeWidth="1.200" strokeLinejoin="round" role="img" aria-label="六角盒底阶梯">
      <path d={plateOutline} fill="#52535f" strokeWidth="1.300" />
      <path d="M622.500 297 621 308 636.500 311 638.500 298ZM662.500 302.500 661 315 671.500 317 672 305ZM795 423 807 419 812.500 431.500 801.500 435ZM810 459 821 455.500 823 467 812 470.500ZM783 635 792 642 786 651 776.500 644ZM761 663 769 671.500 758 680 750 672ZM595.500 728 594.500 741 584 740 585.500 727.500ZM546.500 721 545 732 559 735 560.500 722.500ZM411 618 422 614 418 603.500 409 607ZM395 570 405 566.500 410 579 400.500 582ZM426 394.500 434 402.500 443 392 436 386ZM459 356 467 363 459.500 372 452 366Z" fill="#5b5d68" />
      <path d="M774.500 323 811 429M822 456.500 858 562M856.500 563.500 787 648M768 671 695 757" strokeWidth="1.700" />
      <path d="M528 292 761 333 841 560 687 744 453 702 374 476Z" fill="#52535f" />
      <path d="M528 292 761 333M687 744 453 702" strokeWidth="1.800" />
      <path d="M761 333 838 560.500 687 744 689 744 842 560 764.500 334Z" fill="#858894" strokeWidth="1.100" />
      {pockets.map((d) => (
        <path key={d} d={d} fill="#52535f" strokeWidth="1.200" />
      ))}
      {walls.map((d) => (
        <path key={d} d={d} fill="#777985" strokeWidth="1" />
      ))}
      <path d="M537 305 746 343M390 473 598 511M388 484 596 522M617 514 825 552M615 525 823 562M467 694 676 730.500" strokeWidth="2" />
      <path d="M309.500 863 320 874.500 316 874.500 319 882 313.500 882 311.500 876.500 308.500 878Z" fill="#b3262b" stroke="#5d1418" strokeWidth="0.800" />
    </svg>
  );
}

function Viewport() {
  return (
    <main
      aria-label="图形区域"
      className="relative min-w-0 flex-1 overflow-hidden bg-white bg-[linear-gradient(to_bottom,rgba(255,255,255,0)_57%,rgba(255,255,255,0.6)_68%,#ffffff_79%),linear-gradient(166deg,#ffffff_26%,#f1f3f7_42%,#e0e3ec_55%,#dadee9_64%)]"
    >
      <Plate />
      <div className="absolute top-[7px] right-[2px] flex items-center gap-[10px]">
        {viewTools.map(([icon, label]) => (
          <button key={label} aria-label={label} className="flex w-7">
            {icon}
          </button>
        ))}
        <div className="-ml-[3px] flex items-center gap-3">
          <button aria-label="视图选项">
            <Caret className="text-[#9a9a9a]" />
          </button>
          <button aria-label="显示样式">
            <DisplayStyle />
          </button>
        </div>
      </div>
      <span className="absolute bottom-4 left-8 font-['Liberation_Serif',serif] text-xs leading-4 text-[#b3262b]">X</span>
    </main>
  );
}

export default function App() {
  return (
    <div className="flex h-screen flex-col overflow-hidden bg-[#f7f7f7] font-['Noto_Sans','Noto_Sans_CJK_SC',sans-serif] text-[#141414]">
      <Gradients />
      <TitleBar />
      <Ribbon />
      <CommandTabs />
      <div className="flex min-h-0 flex-1">
        <FeaturePanel />
        <Viewport />
      </div>
    </div>
  );
}
